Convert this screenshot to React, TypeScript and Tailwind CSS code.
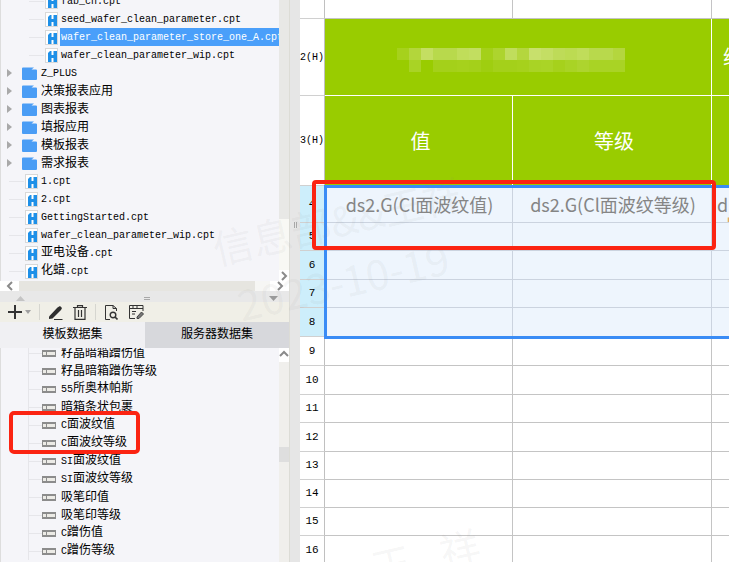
import React from 'react';

const monoStack = "font-['Liberation_Mono','Noto_Sans_CJK_SC',monospace]";

// Latin runs sit at 10px (6px advance), CJK runs at 12px, like the bitmap font in the shot
const MixedLabel = ({ text }: { text: string }) => (
  <span className={`${monoStack} whitespace-nowrap leading-[18px]`}>
    {text.split(/([\x00-\x7f]+)/).filter(Boolean).map((part, i) =>
      /^[\x00-\x7f]+$/.test(part) ? (
        <span key={i} className="text-[10px]">{part}</span>
      ) : (
        <span key={i} className="text-[12px]">{part}</span>
      )
    )}
  </span>
);

const FileIcon = () => (
  <svg width="13" height="15" viewBox="0 0 13 15" className="shrink-0">
    <rect x="0.5" y="0.5" width="12" height="14" fill="#fff" stroke="#d8d8d8" />
    <path d="M3 5L5 3H6.5V7H8.5V3H12V14H8.5V10H6.5V14H3Z" fill="#1e90e8" />
  </svg>
);

const FolderIcon = () => (
  <svg width="15" height="13" viewBox="0 0 15 13" className="shrink-0">
    <path d="M0 1.5Q0 .5 1 .5H12L9.5 2.5H14Q15 2.5 15 3.5V12Q15 13 14 13H1Q0 13 0 12Z" fill="#4a9df5" />
  </svg>
);

const CollapsedArrow = () => (
  <svg width="5" height="8" viewBox="0 0 5 8" className="shrink-0">
    <path d="M0 0L5 4L0 8Z" fill="#a9a9a9" />
  </svg>
);

const FieldIcon = () => (
  <svg width="14" height="7" viewBox="0 0 14 7" className="shrink-0">
    <rect width="14" height="7" fill="#8c8c8c" />
    <rect x="1" y="2" width="12" height="3" fill="#ecebe6" />
    <rect x="4" y="2" width="1" height="3" fill="#8c8c8c" />
  </svg>
);

const ScrollArrow = ({ dir }: { dir: 'up' | 'down' | 'left' | 'right' }) => {
  const paths = {
    up: 'M1 6L5 2L9 6',
    down: 'M1 2L5 6L9 2',
    left: 'M7 1L3 5L7 9',
    right: 'M3 1L7 5L3 9',
  };
  return (
    <svg width="10" height="10" viewBox="0 0 10 10">
      <path d={paths[dir]} fill="none" stroke="#8a8a8a" strokeWidth="2" />
    </svg>
  );
};

const treeRows = [
  { kind: 'deep', label: 'fab_cn.cpt' },
  { kind: 'deep', label: 'seed_wafer_clean_parameter.cpt' },
  { kind: 'deep', label: 'wafer_clean_parameter_store_one_A.cpt', selected: true },
  { kind: 'deep', label: 'wafer_clean_parameter_wip.cpt' },
  { kind: 'folder', label: 'Z_PLUS' },
  { kind: 'folder', label: '决策报表应用' },
  { kind: 'folder', label: '图表报表' },
  { kind: 'folder', label: '填报应用' },
  { kind: 'folder', label: '模板报表' },
  { kind: 'folder', label: '需求报表' },
  { kind: 'file', label: '1.cpt' },
  { kind: 'file', label: '2.cpt' },
  { kind: 'file', label: 'GettingStarted.cpt' },
  { kind: 'file', label: 'wafer_clean_parameter_wip.cpt' },
  { kind: 'file', label: '亚电设备.cpt' },
  { kind: 'file', label: '化蜡.cpt' },
];

const fieldRows = [
  '籽晶暗箱蹭伤值',
  '籽晶暗箱蹭伤等级',
  '55所奥林帕斯',
  '暗箱条状包裹',
  'C面波纹值',
  'C面波纹等级',
  'SI面波纹值',
  'SI面波纹等级',
  '吸笔印值',
  '吸笔印等级',
  'C蹭伤值',
  'C蹭伤等级',
];

const TreeRow = ({ kind, label, selected }: { kind: string; label: string; selected?: boolean }) => {
  if (kind === 'folder') {
    return (
      <div className="flex h-[18px] items-center pl-[6px]">
        <CollapsedArrow />
        <span className="w-[10px]" />
        <FolderIcon />
        <span className="w-[4px]" />
        <MixedLabel text={label} />
      </div>
    );
  }
  if (kind === 'file') {
    return (
      <div className="flex h-[18px] items-center pl-[8px]">
        <span className="h-px w-[15px] bg-[#e6e6ea]" />
        <span className="ml-px"><FileIcon /></span>
        <span className="w-[3px]" />
        <MixedLabel text={label} />
      </div>
    );
  }
  return (
    <div className="flex h-[18px] items-center pl-[28px]">
      <span className="h-px w-[15px] bg-[#e6e6ea]" />
      <span className="ml-px"><FileIcon /></span>
      <span className={`ml-[2px] flex h-[18px] min-w-0 flex-1 items-center overflow-hidden pl-px ${selected ? 'bg-[#4a9ffa] text-white' : 'text-black'}`}>
        <MixedLabel text={label} />
      </span>
    </div>
  );
};

const FilePanel = () => (
  <div className="flex h-[291px] flex-col">
    <div className="flex min-h-0 flex-1">
      <div className="min-w-0 flex-1 overflow-hidden border-l border-[#dddddd] bg-[#f5f5f9]">
        <div className="-mt-[8px]">
          {treeRows.map((row) => (
            <TreeRow key={row.label + row.kind} {...row} />
          ))}
        </div>
      </div>
      <div className="flex w-[10px] flex-col bg-[#e8e8e6]">
        <div className="flex-1" />
        <div className="flex h-[51px] items-end bg-[#f8f8f4]" />
        <div className="flex h-[11px] items-center justify-center bg-white"><ScrollArrow dir="right" /></div>
      </div>
    </div>
    <div className="flex h-[10px] items-center bg-[#e6e5e0]">
      <div className="flex h-[10px] w-[19px] items-center justify-center bg-white"><ScrollArrow dir="left" /></div>
      <div className="flex-1" />
      <div className="h-[10px] w-[15px] bg-[#f6f6f4]" />
      <div className="flex h-[10px] w-[19px] items-center justify-center bg-white"><ScrollArrow dir="right" /></div>
    </div>
  </div>
);

const Splitter = () => (
  <div className="flex h-[11px] items-center justify-between bg-[#e8e8e8] pl-[16px] pr-[11px] pt-[3px]">
    <svg width="9" height="5" viewBox="0 0 9 5"><path d="M0 5L4.5 0L9 5Z" fill="#c4c4c4" /></svg>
    <div className="flex flex-col gap-px">
      <span className="h-px w-[6px] bg-[#a8a8a8]" />
      <span className="h-px w-[6px] bg-[#a8a8a8]" />
    </div>
    <svg width="9" height="5" viewBox="0 0 9 5"><path d="M0 0L4.5 5L9 0Z" fill="#9a9a9a" /></svg>
  </div>
);

const Toolbar = () => (
  <div className="flex h-[20px] items-center bg-[#f0efe7] pl-[8px]">
    <svg width="14" height="14" viewBox="0 0 14 14" className="shrink-0">
      <path d="M7 0V14M0 7H14" stroke="#333" strokeWidth="2" />
    </svg>
    <svg width="6" height="4" viewBox="0 0 6 4" className="ml-[3px] shrink-0"><path d="M0 0H6L3 4Z" fill="#a0a0a0" /></svg>
    <span className="ml-[8px] h-[16px] w-px bg-[#d6d6d0]" />
    <svg width="15" height="15" viewBox="0 0 15 15" className="ml-[8px] shrink-0">
      <path d="M1 11.5L9.5 2.5L12 1L14 3L13 5L4.5 13.5L1 14Z" fill="#2e2e2e" />
      <path d="M6 14.5H14.5" stroke="#2e2e2e" strokeWidth="1" />
    </svg>
    <svg width="14" height="15" viewBox="0 0 14 15" fill="none" stroke="#333" strokeWidth="1.2" className="ml-[10px] shrink-0">
      <path d="M0 2.5H14M4.5 2.5V0.6H9.5V2.5M2 2.5V14.4H12V2.5M5.5 5V12M8.5 5V12" />
    </svg>
    <span className="ml-[8px] h-[16px] w-px bg-[#d6d6d0]" />
    <svg width="13" height="15" viewBox="0 0 13 15" fill="none" stroke="#333" className="ml-[9px] shrink-0">
      <path d="M5 14.5H0.5V0.5H8L11.5 3.5V6M8 .5V3.5H11.5" />
      <circle cx="8" cy="10" r="2.8" strokeWidth="1.4" />
      <path d="M10 12L12.5 14.5" strokeWidth="1.6" />
    </svg>
    <svg width="15" height="14" viewBox="0 0 15 14" fill="none" stroke="#333" className="ml-[11px] shrink-0">
      <path d="M14 6V0.5H0.5V13.5H6M0.5 3.5H14M3 2H5M7 2H9" />
      <path d="M8 12L12.5 7L14.5 9L10 13.5H8Z" fill="#777" stroke="#444" />
      <path d="M3 6.5H7M3 9H6" />
    </svg>
  </div>
);

const Tabs = () => (
  <div className={`grid h-[26px] grid-cols-[145px_144px] text-[12px] leading-[26px] text-black ${monoStack}`}>
    <div className="bg-[#f0f0f3] text-center">模板数据集</div>
    <div className="bg-[#d7d8dc] text-center">服务器数据集</div>
  </div>
);

const FieldList = () => (
  <div className="flex min-h-0 flex-1">
    <div className="min-w-0 flex-1 overflow-hidden border-l border-[#dddddd] bg-[#f5f5f9]">
      <div className="-mt-[5px] ml-[27px] border-l border-[#e6e6ea] pt-px">
        {fieldRows.map((label) => (
          <div key={label} className="flex h-[18px] items-center">
            <span className="h-px w-[13px] bg-[#e6e6ea]" />
            <FieldIcon />
            <span className="w-[5px]" />
            <MixedLabel text={label} />
          </div>
        ))}
      </div>
    </div>
    <div className="flex w-[10px] flex-col bg-[#f0efec]">
      <div className="flex h-[14px] items-center justify-center bg-white"><ScrollArrow dir="up" /></div>
      <div className="h-[85px]" />
      <div className="h-[15px] bg-[#dedede]" />
    </div>
  </div>
);

const mosaicTop = [
  'bg-[#a6d11c]', 'bg-[#b3d63b]', 'bg-[#c4de62]', 'bg-[#b8d94c]', 'bg-[#b8d94c]', 'bg-[#c0dd5a]', 'bg-[#c2de60]',
  'bg-[#a4d01a]', 'bg-[#add42e]', 'bg-[#c0dd5c]', 'bg-[#b4d63e]', 'bg-[#c8e06c]', 'bg-[#c4de64]', 'bg-[#bedb58]',
  'bg-[#bcdb52]', 'bg-[#c0dd5a]', 'bg-[#b8d94c]', 'bg-[#b8d94c]', 'bg-[#b4d63e]',
];

const mosaicBottom = [
  'bg-[#99cc00]', 'bg-[#a9d325]', 'bg-[#99cc00]', 'bg-[#a4d01a]', 'bg-[#a4d01a]', 'bg-[#a6d11c]', 'bg-[#a4d01a]',
  'bg-[#9fce10]', 'bg-[#a4d01a]', 'bg-[#a4d01a]', 'bg-[#a6d11c]', 'bg-[#a9d325]', 'bg-[#aad426]', 'bg-[#a6d11c]',
  'bg-[#a9d325]', 'bg-[#add42e]', 'bg-[#a9d325]', 'bg-[#a9d325]', 'bg-[#a9d325]',
];

const RowHead = ({ label, selected }: { label: string; selected?: boolean }) => (
  <div className={`flex items-center justify-center border-b border-r border-b-[#d0d0d0] border-r-[#c0c0c0] ${monoStack} text-black ${label.includes('H') ? 'text-[10px]' : 'text-[11px]'} ${selected ? 'bg-[#cdeefb]' : 'bg-white'}`}>
    {label}
  </div>
);

const gridCols = 'grid grid-cols-[25px_188px_199px_18px]';
const plainCell = 'border-b border-r border-[#c4c4c4] bg-white';
const selectedCell = 'border-b border-r border-[#cbd3df] bg-[#eef5fd]';
const greenCell = 'flex items-center justify-center overflow-hidden border-b border-r border-white bg-[#99cc00] text-[20px] text-white';
const valueCell = `${selectedCell} flex items-center justify-center overflow-hidden whitespace-nowrap text-[18px] text-[#858585] font-['Noto_Sans_CJK_SC',sans-serif]`;

const blankRows = [
  { label: '6', h: 'h-[29px]' },
  { label: '7', h: 'h-[28px]' },
  { label: '8', h: 'h-[29px]' },
];

const lowerRows = [
  { label: '9', h: 'h-[29px]' },
  { label: '10', h: 'h-[29px]' },
  { label: '11', h: 'h-[28px]' },
  { label: '12', h: 'h-[29px]' },
  { label: '13', h: 'h-[28px]' },
  { label: '14', h: 'h-[28px]' },
  { label: '15', h: 'h-[28px]' },
  { label: '16', h: 'h-[29px]' },
];

const Sheet = () => (
  <div className="relative min-w-0 flex-1 overflow-hidden bg-white">
    <div className={`${gridCols} h-[19px]`}>
      <RowHead label="" />
      <div className={plainCell} />
      <div className={plainCell} />
      <div className={plainCell} />
    </div>
    <div className={`${gridCols} h-[77px]`}>
      <RowHead label="2(H)" />
      <div className={`${greenCell} col-span-2 flex-col pr-[14px]`}>
        <div className="mt-[6px] flex">{mosaicTop.map((c, i) => <span key={i} className={`h-[12px] w-[12px] ${c}`} />)}</div>
        <div className="flex">{mosaicBottom.map((c, i) => <span key={i} className={`h-[12px] w-[12px] ${c}`} />)}</div>
      </div>
      <div className={`${greenCell} justify-start pl-[11px] font-['Noto_Sans_CJK_SC',sans-serif]`}>纹</div>
    </div>
    <div className={`${gridCols} h-[90px] font-['Noto_Sans_CJK_SC',sans-serif]`}>
      <RowHead label="3(H)" />
      <div className={`${greenCell} pl-[4px]`}>值</div>
      <div className={`${greenCell} pl-[4px]`}>等级</div>
      <div className={greenCell} />
    </div>
    <div className={`${gridCols} h-[37px]`}>
      <RowHead label="4" selected />
      <div className={`${valueCell} pl-[2px]`}>ds2.G(Cl面波纹值)</div>
      <div className={`${valueCell} pl-[2px]`}>ds2.G(Cl面波纹等级)</div>
      <div className={`${valueCell} !items-start !justify-start pl-[5px] pt-[8px] leading-[20px]`}>
        <div className="flex flex-col"><span>d</span><span>c<span className="text-[#e0a868]">l</span></span></div>
      </div>
    </div>
    <div className={`${gridCols} h-[28px]`}>
      <RowHead label="5" selected />
      <div className={selectedCell} />
      <div className={selectedCell} />
      <div className={selectedCell} />
    </div>
    {blankRows.map((row) => (
      <div key={row.label} className={`${gridCols} ${row.h}`}>
        <RowHead label={row.label} selected />
        <div className={selectedCell} />
        <div className={selectedCell} />
        <div className={selectedCell} />
      </div>
    ))}
    {lowerRows.map((row) => (
      <div key={row.label} className={`${gridCols} ${row.h}`}>
        <RowHead label={row.label} />
        <div className={plainCell} />
        <div className={plainCell} />
        <div className={plainCell} />
      </div>
    ))}

    {/* selection frame */}
    <div className="pointer-events-none absolute left-[24px] right-[-4px] top-[185px] h-[154px] border-[3px] border-[#3a8cf5]" />
  </div>
);

export default function App() {
  return (
    <div className="relative flex h-[562px] w-[729px] overflow-hidden bg-white">
      <aside className="flex w-[290px] shrink-0 flex-col border-r border-[#dcdcd6] bg-[#f3f1ec]">
        <FilePanel />
        <Splitter />
        <Toolbar />
        <Tabs />
        <FieldList />
      </aside>
      <div className="relative flex w-[10px] shrink-0 items-center justify-center bg-[#e6e6e6]">
        <div className="-mt-[112px] flex gap-px">
          <span className="h-[6px] w-px bg-[#a8a8a8]" />
          <span className="h-[6px] w-px bg-[#a8a8a8]" />
        </div>
      </div>
      <Sheet />

      {/* watermark over the whole window */}
      <div className="pointer-events-none absolute left-[210px] top-[200px] -rotate-[13deg] whitespace-nowrap text-[40px] leading-[40px] text-[#8a8a8a]/8 font-['Noto_Sans_CJK_SC',sans-serif]">
        信息部&amp;&amp;王祥
      </div>
      <div className="pointer-events-none absolute left-[235px] top-[260px] -rotate-[13deg] whitespace-nowrap text-[42px] leading-[40px] text-[#8a8a8a]/8 font-['Noto_Sans_CJK_SC',sans-serif]">
        2023-10-19
      </div>
      <div className="pointer-events-none absolute left-[370px] top-[532px] -rotate-[13deg] whitespace-nowrap text-[40px] leading-[40px] tracking-[30px] text-[#8a8a8a]/8 font-['Noto_Sans_CJK_SC',sans-serif]">
        王祥
      </div>

      {/* red annotation boxes */}
      <div className="pointer-events-none absolute left-[312px] top-[180px] h-[70px] w-[404px] rounded-[4px] border-[4px] border-[#fb2412]" />
      <div className="pointer-events-none absolute left-[9px] top-[411px] h-[43px] w-[131px] rounded-[5px] border-[4px] border-[#fb2412]" />
    </div>
  );
}
